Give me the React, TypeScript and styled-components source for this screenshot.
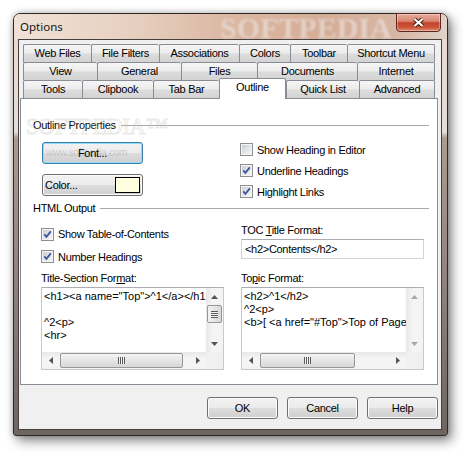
import React from "react";
import styled, { createGlobalStyle } from "styled-components";

const GlobalStyle = createGlobalStyle`
  html, body {
    margin: 0;
    padding: 0;
    background: #ffffff;
  }
  body {
    font-family: "Liberation Sans", Arial, sans-serif;
    font-size: 11px;
    letter-spacing: -0.3px;
    color: #000;
  }
`;

type TabDef = { label: string; width: number; selected?: boolean };

const tabRows: TabDef[][] = [
  [
    { label: "Web Files", width: 68 },
    { label: "File Filters", width: 68 },
    { label: "Associations", width: 80 },
    { label: "Colors", width: 51 },
    { label: "Toolbar", width: 57 },
    { label: "Shortcut Menu", width: 88 },
  ],
  [
    { label: "View", width: 74 },
    { label: "General", width: 84 },
    { label: "Files", width: 76 },
    { label: "Documents", width: 100 },
    { label: "Internet", width: 78 },
  ],
  [
    { label: "Tools", width: 59 },
    { label: "Clipbook", width: 71 },
    { label: "Tab Bar", width: 66 },
    { label: "Outline", width: 67, selected: true },
    { label: "Quick List", width: 73 },
    { label: "Advanced", width: 76 },
  ],
];

const CheckBox = ({ checked }: { checked: boolean }) => (
  <svg width="13" height="13" viewBox="0 0 13 13">
    <defs>
      <linearGradient id={checked ? "cbOn" : "cbOff"} x1="0" y1="0" x2="1" y2="1">
        <stop offset="0" stopColor="#cbcfd5" />
        <stop offset="1" stopColor="#f6f6f6" />
      </linearGradient>
    </defs>
    <rect x="0.5" y="0.5" width="12" height="12" fill="#f4f4f4" stroke="#8e8f8f" />
    <rect x="2" y="2" width="9" height="9" fill={`url(#${checked ? "cbOn" : "cbOff"})`} />
    {checked && (
      <path d="M3.3 6.4 L5.4 8.9 L9.8 3.4" fill="none" stroke="#3a539a" strokeWidth="1.7" />
    )}
  </svg>
);

const Arrow = ({ dir, disabled }: { dir: "up" | "down" | "left" | "right"; disabled?: boolean }) => {
  const pts = {
    up: "0,4 3.5,0 7,4",
    down: "0,0 3.5,4 7,0",
    left: "4,0 0,3.5 4,7",
    right: "0,0 4,3.5 0,7",
  }[dir];
  const vertical = dir === "up" || dir === "down";
  return (
    <svg width={vertical ? 7 : 4} height={vertical ? 4 : 7}>
      <polygon points={pts} fill={disabled ? "#a8a8a8" : "#555555"} />
    </svg>
  );
};

const CloseGlyph = () => (
  <svg width="13" height="11" viewBox="0 0 13 11">
    <path d="M2.5 2 L10.5 9 M10.5 2 L2.5 9" stroke="#3b1a14" strokeWidth="4" />
    <path d="M2.5 2 L10.5 9 M10.5 2 L2.5 9" stroke="#ffffff" strokeWidth="2.2" />
  </svg>
);

type TextBoxProps = {
  lines: string[];
  thumbWidth: number;
  hasVThumb: boolean;
};

const TextArea = ({ lines, thumbWidth, hasVThumb }: TextBoxProps) => (
  <TextAreaFrame>
    <TextContent>
      {lines.map((l, i) => (
        <TextLine key={i}>{l || "\u00a0"}</TextLine>
      ))}
    </TextContent>
    <VScroll>
      <ArrowBtn>
        <Arrow dir="up" disabled={!hasVThumb} />
      </ArrowBtn>
      <VTrack>{hasVThumb && <VThumb><VGrip /></VThumb>}</VTrack>
      <ArrowBtn>
        <Arrow dir="down" disabled={!hasVThumb} />
      </ArrowBtn>
    </VScroll>
    <HScroll>
      <ArrowBtn>
        <Arrow dir="left" />
      </ArrowBtn>
      <HTrack>
        <HThumb style={{ width: thumbWidth }}>
          <HGrip />
        </HThumb>
      </HTrack>
      <ArrowBtn>
        <Arrow dir="right" />
      </ArrowBtn>
    </HScroll>
    <Corner />
  </TextAreaFrame>
);

const App: React.FC = () => {
  return (
    <Page>
      <GlobalStyle />
      <Window>
        <TitleBar>
          <Watermark>SOFTPEDIA</Watermark>
          <Title>Options</Title>
          <CloseButton>
            <CloseGlyph />
          </CloseButton>
        </TitleBar>
        <Client>
          <TabStrip>
            {tabRows.map((row, r) => (
              <TabRow key={r}>
                {row.map((t) => (
                  <Tab key={t.label} $w={t.width} $selected={!!t.selected}>
                    {t.label}
                  </Tab>
                ))}
              </TabRow>
            ))}
          </TabStrip>
          <Panel>
            <Legend $top={20}>
              <LegendText>Outline Properties</LegendText>
              <LegendLine />
              <PanelWatermark>SOFTPEDIA™</PanelWatermark>
            </Legend>
            <OutlineBody>
              <ButtonColumn>
                <PushButton $focused>
                  <ButtonWatermark>www.softpedia.com</ButtonWatermark>
                  <ButtonLabel>Font...</ButtonLabel>
                </PushButton>
                <PushButton $align="space-between">
                  <ButtonLabel>Color...</ButtonLabel>
                  <Swatch $color="#ffffe0" />
                </PushButton>
              </ButtonColumn>
              <div>
                <CheckRow $h={21}>
                  <CheckBox checked={false} />
                  Show Heading in Editor
                </CheckRow>
                <CheckRow $h={21}>
                  <CheckBox checked />
                  Underline Headings
                </CheckRow>
                <CheckRow $h={21}>
                  <CheckBox checked />
                  Highlight Links
                </CheckRow>
              </div>
            </OutlineBody>
            <Legend $top={0}>
              <LegendText>HTML Output</LegendText>
              <LegendLine />
            </Legend>
            <HtmlBody>
              <div>
                <CheckRow $h={22}>
                  <CheckBox checked />
                  Show Table-of-Contents
                </CheckRow>
                <CheckRow $h={23}>
                  <CheckBox checked />
                  Number Headings
                </CheckRow>
              </div>
              <div>
                <FieldLabel $top={1}>
                  TOC <u>T</u>itle Format:
                </FieldLabel>
                <TextInput>&lt;h2&gt;Contents&lt;/h2&gt;</TextInput>
              </div>
              <FieldLabel $top={4}>
                Title-Section For<u>m</u>at:
              </FieldLabel>
              <FieldLabel $top={4}>
                To<u>p</u>ic Format:
              </FieldLabel>
              <TextArea
                lines={['<h1><a name="Top">^1</a></h1>', "", "^2<p>", "<hr>"]}
                thumbWidth={123}
                hasVThumb
              />
              <TextArea
                lines={["<h2>^1</h2>", "^2<p>", '<b>[ <a href="#Top">Top of Page</a> ]</b>']}
                thumbWidth={95}
                hasVThumb={false}
              />
            </HtmlBody>
          </Panel>
          <ButtonBar>
            <DialogButton>OK</DialogButton>
            <DialogButton>Cancel</DialogButton>
            <DialogButton>Help</DialogButton>
          </ButtonBar>
        </Client>
      </Window>
    </Page>
  );
};

export default App;

const Page = styled.div`
  width: 468px;
  height: 456px;
  padding: 13px 0 0 13px;
  box-sizing: border-box;
  overflow: hidden;
`;

const Window = styled.div`
  width: 435px;
  height: 423px;
  box-sizing: border-box;
  border: 1px solid #2e2a28;
  border-radius: 7px 7px 3px 3px;
  background: linear-gradient(
    to bottom,
    #e9d9ce 0px,
    #e6ddd7 118px,
    #ab9c92 124px,
    #938680 250px,
    #6e6460 100%
  );
  box-shadow: 4px 5px 12px rgba(0, 0, 0, 0.45), 0 0 6px rgba(0, 0, 0, 0.25);
  display: flex;
  flex-direction: column;
`;

const TitleBar = styled.div`
  position: relative;
  height: 25px;
  flex-shrink: 0;
  display: flex;
  justify-content: space-between;
  align-items: flex-start;
  border-radius: 6px 6px 0 0;
  background: linear-gradient(
    to right,
    #f0e1d6 0%,
    #e7cfbf 28%,
    #dbb7a2 50%,
    #d5ad97 72%,
    #d7b6a4 88%,
    #e0d2c9 100%
  );
`;

const Watermark = styled.div`
  position: absolute;
  left: 206px;
  top: 1px;
  font-family: "Liberation Serif", serif;
  font-weight: bold;
  font-size: 30px;
  line-height: 26px;
  letter-spacing: 0;
  color: rgba(236, 230, 226, 0.6);
  filter: blur(0.8px);
`;

const Title = styled.div`
  position: relative;
  padding-left: 6px;
  line-height: 25px;
  font-family: "Noto Sans", "Liberation Sans", sans-serif;
  font-size: 11.5px;
  letter-spacing: 0;
  color: #151515;
`;

const CloseButton = styled.div`
  position: relative;
  width: 45px;
  height: 19px;
  margin-top: -1px;
  margin-right: 6px;
  box-sizing: border-box;
  border: 1px solid #5a2820;
  border-radius: 0 0 4px 4px;
  background: linear-gradient(
    to bottom,
    #e8ab9c 0%,
    #da8572 42%,
    #c5432b 52%,
    #cc5438 78%,
    #e38a6c 100%
  );
  box-shadow: inset 0 0 0 1px rgba(255, 255, 255, 0.35);
  display: flex;
  align-items: center;
  justify-content: center;
`;

const Client = styled.div`
  flex: 1;
  margin: 0 5px 5px 4px;
  border: 1px solid #45403d;
  background: #f0f0f0;
  padding: 4px 3px 0 1px;
  display: flex;
  flex-direction: column;
`;

const TabStrip = styled.div`
  display: flex;
  flex-direction: column;
  padding: 0 2px 0 3px;
  position: relative;
  z-index: 1;
`;

const TabRow = styled.div`
  display: flex;
  height: 18px;
`;

const Tab = styled.div<{ $w: number; $selected: boolean }>`
  width: ${({ $w }) => $w}px;
  box-sizing: border-box;
  flex-shrink: 0;
  border: 1px solid #898c95;
  border-bottom: none;
  border-right: none;
  border-radius: 2px 2px 0 0;
  text-align: center;
  color: #000;
  background: ${({ $selected }) =>
    $selected
      ? "#ffffff"
      : "linear-gradient(to bottom, #f6f6f6 0%, #ececec 45%, #dcdcdc 55%, #d3d3d3 100%)"};
  line-height: 17px;
  height: ${({ $selected }) => ($selected ? "21px" : "18px")};
  margin-top: ${({ $selected }) => ($selected ? "-2px" : "0")};
  position: relative;
  z-index: ${({ $selected }) => ($selected ? 2 : 0)};
  ${({ $selected }) => ($selected ? "border-right: 1px solid #898c95;" : "")}
  &:last-child {
    border-right: 1px solid #898c95;
  }
`;

const Panel = styled.div`
  height: 287px;
  box-sizing: border-box;
  border: 1px solid #898c95;
  background: #ffffff;
  display: flex;
  flex-direction: column;
`;

const Legend = styled.div<{ $top: number }>`
  position: relative;
  display: flex;
  align-items: center;
  gap: 5px;
  margin-top: ${({ $top }) => $top}px;
  padding: 0 8px 0 12px;
  height: 13px;
`;

const LegendText = styled.span`
  position: relative;
  line-height: 13px;
  white-space: nowrap;
`;

const LegendLine = styled.div`
  flex: 1;
  height: 1px;
  background: #a9a9a9;
`;

const PanelWatermark = styled.span`
  position: absolute;
  left: 5px;
  top: -3px;
  font-family: "Liberation Serif", serif;
  font-size: 23px;
  line-height: 22px;
  letter-spacing: -0.5px;
  color: transparent;
  -webkit-text-stroke: 1px rgba(200, 200, 200, 0.4);
  pointer-events: none;
`;

const OutlineBody = styled.div`
  display: grid;
  grid-template-columns: 101px 1fr;
  column-gap: 97px;
  margin-top: 7px;
  padding-left: 21px;
`;

const ButtonColumn = styled.div`
  display: flex;
  flex-direction: column;
  gap: 10px;
  padding-top: 3px;
`;

const PushButton = styled.div<{ $focused?: boolean; $align?: string }>`
  position: relative;
  height: 22px;
  box-sizing: border-box;
  border: 1px solid ${({ $focused }) => ($focused ? "#3c7fb1" : "#707070")};
  border-radius: 3px;
  background: linear-gradient(
    to bottom,
    #f2f2f2 0%,
    #ebebeb 48%,
    #dddddd 52%,
    #cfcfcf 100%
  );
  box-shadow: inset 0 0 0 1px ${({ $focused }) => ($focused ? "#8fdcf5" : "#fbfbfb")};
  display: flex;
  align-items: center;
  justify-content: ${({ $align }) => $align || "center"};
  padding: 0 2px 0 2px;
`;

const ButtonLabel = styled.span`
  position: relative;
`;

const ButtonWatermark = styled.span`
  position: absolute;
  left: 3px;
  top: 4px;
  font-size: 10px;
  color: rgba(150, 150, 150, 0.4);
  white-space: nowrap;
`;

const Swatch = styled.div<{ $color: string }>`
  width: 25px;
  height: 16px;
  box-sizing: border-box;
  border: 1px solid #000;
  background: ${({ $color }) => $color};
`;

const CheckRow = styled.div<{ $h: number }>`
  height: ${({ $h }) => $h}px;
  display: flex;
  align-items: center;
  gap: 4px;
  white-space: nowrap;
  svg {
    flex-shrink: 0;
  }
`;

const HtmlBody = styled.div`
  display: grid;
  grid-template-columns: 183px 183px;
  column-gap: 17px;
  margin-top: 8px;
  padding-left: 20px;
  align-items: start;
`;

const FieldLabel = styled.div<{ $top: number }>`
  margin-top: ${({ $top }) => $top}px;
  line-height: 13px;
  white-space: nowrap;
`;

const TextInput = styled.div`
  margin-top: 2px;
  height: 20px;
  box-sizing: border-box;
  border: 1px solid #d0d3d8;
  border-top-color: #abadb3;
  padding: 0 3px;
  line-height: 18px;
  background: #fff;
`;

const TextAreaFrame = styled.div`
  margin-top: 2px;
  height: 83px;
  box-sizing: border-box;
  border: 1px solid #c6c9ce;
  border-top-color: #abadb3;
  display: grid;
  grid-template-columns: 1fr 17px;
  grid-template-rows: 1fr 17px;
  background: #fff;
`;

const TextContent = styled.div`
  padding: 2px 0 0 2px;
  overflow: hidden;
  letter-spacing: 0;
`;

const TextLine = styled.div`
  line-height: 13px;
  white-space: pre;
`;

const VScroll = styled.div`
  display: flex;
  flex-direction: column;
  background: linear-gradient(to right, #e8e8e8, #f5f5f5 40%, #f3f3f3);
`;

const HScroll = styled.div`
  display: flex;
  background: linear-gradient(to bottom, #e8e8e8, #f5f5f5 40%, #f3f3f3);
`;

const Corner = styled.div`
  background: #f0f0f0;
`;

const ArrowBtn = styled.div`
  width: 17px;
  height: 17px;
  flex-shrink: 0;
  display: flex;
  align-items: center;
  justify-content: center;
`;

const VTrack = styled.div`
  flex: 1;
  display: flex;
  flex-direction: column;
  align-items: center;
`;

const VThumb = styled.div`
  width: 15px;
  height: 18px;
  box-sizing: border-box;
  border: 1px solid #979797;
  border-radius: 2px;
  background: linear-gradient(to right, #f3f3f3, #e6e6e6 50%, #d6d6d6);
  display: flex;
  align-items: center;
  justify-content: center;
`;

const VGrip = styled.div`
  width: 7px;
  height: 7px;
  background: repeating-linear-gradient(
    to bottom,
    #5a5a5a 0px,
    #5a5a5a 1px,
    #f4f4f4 1px,
    #f4f4f4 2px
  );
`;

const HTrack = styled.div`
  flex: 1;
  display: flex;
  align-items: center;
  padding-left: 1px;
`;

const HThumb = styled.div`
  height: 15px;
  box-sizing: border-box;
  border: 1px solid #979797;
  border-radius: 2px;
  background: linear-gradient(to bottom, #f3f3f3, #e6e6e6 50%, #d6d6d6);
  display: flex;
  align-items: center;
  justify-content: center;
`;

const HGrip = styled.div`
  width: 7px;
  height: 7px;
  background: repeating-linear-gradient(
    to right,
    #5a5a5a 0px,
    #5a5a5a 1px,
    #f4f4f4 1px,
    #f4f4f4 2px
  );
`;

const ButtonBar = styled.div`
  display: flex;
  justify-content: flex-end;
  gap: 9px;
  margin-top: 12px;
`;

const DialogButton = styled.div`
  width: 71px;
  height: 22px;
  box-sizing: border-box;
  border: 1px solid #707070;
  border-radius: 3px;
  background: linear-gradient(
    to bottom,
    #f2f2f2 0%,
    #ebebeb 48%,
    #dddddd 52%,
    #cfcfcf 100%
  );
  box-shadow: inset 0 0 0 1px #fbfbfb;
  display: flex;
  align-items: center;
  justify-content: center;
`;
